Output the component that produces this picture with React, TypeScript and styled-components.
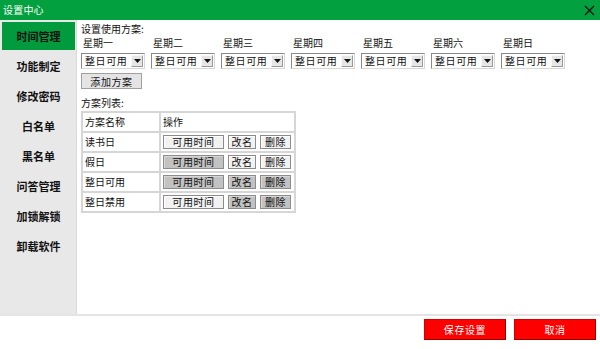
import styled, { createGlobalStyle } from 'styled-components'

const GlobalStyle = createGlobalStyle`
	html, body {
		margin: 0;
		padding: 0;
		background: #ffffff;
	}
	body {
		font-family: "Noto Sans CJK SC", "Noto Sans", sans-serif;
		font-size: 10px;
		color: #111;
	}
`;

const navItems = ['时间管理', '功能制定', '修改密码', '白名单', '黑名单', '问答管理', '加锁解锁', '卸载软件']
const days = ['星期一', '星期二', '星期三', '星期四', '星期五', '星期六', '星期日']

// which buttons of each row look pressed (gray)
const plans = [
	{ name: '读书日', pressed: [false, false, false] },
	{ name: '假日', pressed: [true, false, false] },
	{ name: '整日可用', pressed: [true, true, true] },
	{ name: '整日禁用', pressed: [false, true, true] },
]

const App = () => {

	return(
		<Window>
		<GlobalStyle />
		<TitleBar>
			<TitleText>设置中心</TitleText>
			<CloseButton>
				<svg width="11" height="11" viewBox="0 0 11 11">
					<path d="M1 1 L10 10 M10 1 L1 10" stroke="#111" strokeWidth="1.3" />
				</svg>
			</CloseButton>
		</TitleBar>
		<Body>
			<Sidebar>
				{navItems.map((item, i) => (
					<NavItem key={item} $active={i === 0}>{item}</NavItem>
				))}
			</Sidebar>
			<Content>
				<SectionLabel>设置使用方案:</SectionLabel>
				<DayRow>
					{days.map(day => (
						<DayColumn key={day}>
							<DayLabel>{day}</DayLabel>
							<FakeSelect>
								<SelectText>整日可用</SelectText>
								<SelectArrow>
									<svg width="7" height="4" viewBox="0 0 7 4">
										<path d="M0 0 L7 0 L3.5 4 Z" fill="#111" />
									</svg>
								</SelectArrow>
							</FakeSelect>
						</DayColumn>
					))}
				</DayRow>
				<AddButton>添加方案</AddButton>
				<ListLabel>方案列表:</ListLabel>
				<PlanTable>
					<tbody>
						<tr>
							<NameCell>方案名称</NameCell>
							<ActionCell>操作</ActionCell>
						</tr>
						{plans.map(plan => (
							<tr key={plan.name}>
								<NameCell>{plan.name}</NameCell>
								<ActionCell>
									<Actions>
										<RowButton $w={61} $pressed={plan.pressed[0]}>可用时间</RowButton>
										<RowButton $w={28} $pressed={plan.pressed[1]}>改名</RowButton>
										<RowButton $w={31} $pressed={plan.pressed[2]}>删除</RowButton>
									</Actions>
								</ActionCell>
							</tr>
						))}
					</tbody>
				</PlanTable>
			</Content>
		</Body>
		<Footer>
			<RedButton>保存设置</RedButton>
			<RedButton>取消</RedButton>
		</Footer>
		</Window>
	)
}

export default App

const Window = styled.div`
	width: 600px;
	height: 349px;
	display: flex;
	flex-direction: column;
	background: #fff;
	overflow: hidden;
`;

const TitleBar = styled.div`
	height: 20px;
	flex: none;
	display: flex;
	align-items: center;
	justify-content: space-between;
	background: #03a03f;
	padding-left: 3px;
	box-sizing: border-box;
`;

const TitleText = styled.span`
	color: #fff;
	font-size: 10px;
	line-height: 12px;
	letter-spacing: 0.2px;
`;

const CloseButton = styled.div`
	width: 22px;
	height: 20px;
	display: flex;
	align-items: center;
	justify-content: center;
`;

const Body = styled.div`
	height: 294px;
	flex: none;
	display: flex;
`;

const Sidebar = styled.div`
	width: 77px;
	flex: none;
	box-sizing: border-box;
	background: #e8e8e8;
	border-right: 1px solid #dadada;
	padding: 2px 0 0 2px;
	display: flex;
	flex-direction: column;
	gap: 2px;
`;

const NavItem = styled.div<{ $active?: boolean }>`
	height: 28px;
	display: flex;
	align-items: center;
	justify-content: center;
	font-weight: bold;
	font-size: 11px;
	color: #111;
	background: ${p => (p.$active ? '#019a3c' : 'transparent')};
	margin-right: 1px;
`;

const Content = styled.div`
	flex: 1;
	padding: 3px 0 0 4px;
	display: flex;
	flex-direction: column;
	align-items: flex-start;
`;

const SectionLabel = styled.div`
	line-height: 12px;
	height: 12px;
`;

const DayRow = styled.div`
	display: flex;
	margin-top: 2px;
`;

const DayColumn = styled.div`
	width: 70px;
	display: flex;
	flex-direction: column;
`;

const DayLabel = styled.div`
	line-height: 12px;
	height: 12px;
	padding-left: 2px;
`;

const FakeSelect = styled.div`
	margin-top: 4px;
	width: 64px;
	height: 16px;
	box-sizing: border-box;
	border: 1px solid #8a8a8a;
	border-right-color: #d8d8d8;
	border-bottom-color: #d8d8d8;
	background: #fff;
	display: flex;
	align-items: center;
	padding: 0 1px 0 3px;
`;

const SelectText = styled.span`
	flex: 1;
	font-size: 10px;
	letter-spacing: 0.6px;
	line-height: 12px;
`;

const SelectArrow = styled.span`
	width: 12px;
	height: 12px;
	box-sizing: border-box;
	background: #e6e6e6;
	border: 1px solid #f8f8f8;
	border-right-color: #9a9a9a;
	border-bottom-color: #9a9a9a;
	display: flex;
	align-items: center;
	justify-content: center;
`;

const AddButton = styled.div`
	margin-top: 4px;
	width: 61px;
	height: 16px;
	box-sizing: border-box;
	background: #e4e4e4;
	border: 1px solid #a0a0a0;
	display: flex;
	align-items: center;
	justify-content: center;
	letter-spacing: 0.6px;
`;

const ListLabel = styled.div`
	margin-top: 8px;
	line-height: 12px;
	height: 12px;
`;

const PlanTable = styled.table`
	margin-top: 2px;
	width: 215px;
	border-collapse: collapse;
	border: 2px solid #d6d6d6;
	td {
		border: 2px solid #d6d6d6;
		height: 16px;
		padding: 1px 2px;
		line-height: 12px;
	}
`;

const NameCell = styled.td`
	width: 72px;
`;

const ActionCell = styled.td``;

const Actions = styled.div`
	display: flex;
	gap: 4px;
`;

const RowButton = styled.div<{ $w: number; $pressed?: boolean }>`
	width: ${p => p.$w}px;
	height: 14px;
	box-sizing: border-box;
	background: ${p => (p.$pressed ? '#c2c2c2' : '#f2f2f2')};
	border: 1px solid #8c8c8c;
	box-shadow: inset 1px 1px 0 ${p => (p.$pressed ? '#d8d8d8' : '#ffffff')};
	display: flex;
	align-items: center;
	justify-content: center;
	letter-spacing: 0.6px;
	font-size: 10px;
`;

const Footer = styled.div`
	flex: 1;
	border-top: 2px solid #e4e4e4;
	display: flex;
	justify-content: flex-end;
	align-items: flex-start;
	gap: 8px;
	padding: 3px 4px 0 0;
`;

const RedButton = styled.div`
	width: 82px;
	height: 21px;
	box-sizing: border-box;
	background: #ff0000;
	border: 1px solid #d40000;
	border-right-color: #9a0000;
	border-bottom-color: #9a0000;
	color: #fff;
	display: flex;
	align-items: center;
	justify-content: center;
	letter-spacing: 0.6px;
	font-size: 10px;
`;
